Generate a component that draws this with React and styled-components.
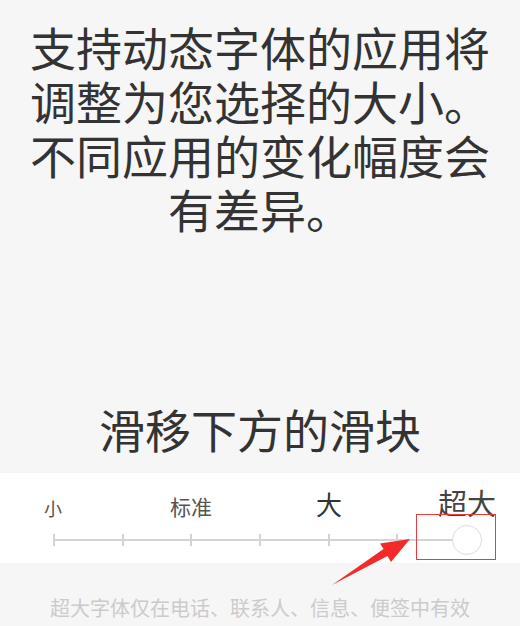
import styled, { createGlobalStyle } from "styled-components";

const GlobalStyle = createGlobalStyle`
  html, body {
    margin: 0;
    padding: 0;
    background: #ffffff;
  }
  body {
    font-family: "Noto Sans CJK SC", "Noto Sans", sans-serif;
  }
`;

const Screen = styled.div`
  position: relative;
  width: 520px;
  height: 626px;
  background: #f6f6f6;
  display: flex;
  flex-direction: column;
  align-items: center;
  overflow: hidden;
`;

const Intro = styled.p`
  margin: 0;
  padding-top: 19px;
  width: 470px;
  font-size: 46px;
  line-height: 54px;
  color: #333;
  text-align: center;
`;

const Heading = styled.h2`
  margin: 166px 0 0;
  font-size: 46px;
  line-height: 54px;
  font-weight: normal;
  color: #333;
  text-align: center;
`;

const Panel = styled.div`
  margin-top: 18px;
  align-self: stretch;
  height: 90px;
  background: #fff;
  padding-top: 14px;
  box-sizing: border-box;
  display: flex;
  flex-direction: column;
`;

const Labels = styled.div`
  height: 30px;
  padding-left: 23px;
  display: grid;
  grid-template-columns: repeat(4, 60px);
  column-gap: 78px;
  align-items: end;
`;

const Label = styled.span`
  text-align: center;
  font-size: ${(p) => p.$size}px;
  line-height: 1;
  color: ${(p) => p.$color};
  white-space: nowrap;
`;

const TrackRow = styled.div`
  position: relative;
  flex: 1;
  display: flex;
  align-items: center;
  padding-left: 53px;
`;

const Track = styled.div`
  position: relative;
  width: 414px;
  height: 12px;
  display: flex;
  justify-content: space-between;
  align-items: center;
  &::before {
    content: "";
    position: absolute;
    left: 0;
    right: 0;
    top: 5px;
    height: 2px;
    background: #d4d4d4;
  }
`;

const Tick = styled.span`
  width: 2px;
  height: 12px;
  background: #d4d4d4;
`;

const Thumb = styled.span`
  position: absolute;
  right: -15px;
  top: -9px;
  width: 28px;
  height: 28px;
  border-radius: 50%;
  background: #fff;
  border: 1px solid #dcdcdc;
`;

const Note = styled.p`
  margin: 0;
  padding-top: 31px;
  font-size: 20px;
  line-height: 28px;
  color: #cbcbcb;
  text-align: center;
`;

const Highlight = styled.div`
  position: absolute;
  left: 416px;
  top: 514px;
  width: 78px;
  height: 44px;
  border: 1.5px solid #ec3b3b;
`;

const Arrow = styled.svg`
  position: absolute;
  left: 0;
  top: 0;
  pointer-events: none;
`;

const labels = [
  { text: "小", size: 18, color: "#555" },
  { text: "标准", size: 21, color: "#555" },
  { text: "大", size: 26, color: "#333" },
  { text: "超大", size: 29, color: "#444" },
];

export default function App() {
  return (
    <>
      <GlobalStyle />
      <Screen>
        <Intro>支持动态字体的应用将调整为您选择的大小。不同应用的变化幅度会有差异。</Intro>
        <Heading>滑移下方的滑块</Heading>
        <Panel>
          <Labels>
            {labels.map((l) => (
              <Label key={l.text} $size={l.size} $color={l.color}>
                {l.text}
              </Label>
            ))}
          </Labels>
          <TrackRow>
            <Track>
              {Array.from({ length: 7 }).map((_, i) => (
                <Tick key={i} />
              ))}
              <Thumb />
            </Track>
          </TrackRow>
        </Panel>
        <Note>超大字体仅在电话、联系人、信息、便签中有效</Note>
        <Highlight />
        <Arrow width="520" height="626" viewBox="0 0 520 626">
          <polygon
            points="332,585 383.5,549 380,543.5 410,539 391,562 387.5,556"
            fill="#f22a2a"
          />
        </Arrow>
      </Screen>
    </>
  );
}
